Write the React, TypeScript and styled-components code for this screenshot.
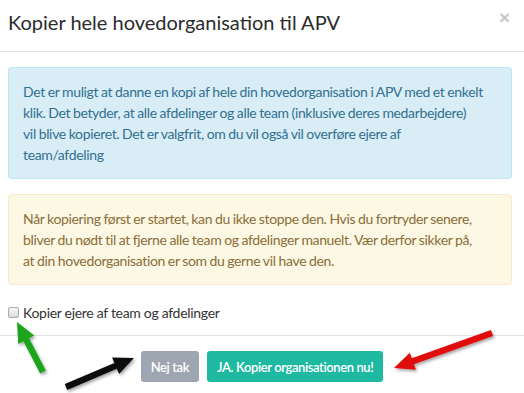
import React from 'react';
import styled, {createGlobalStyle} from "styled-components";

const GlobalStyle = createGlobalStyle`
    html, body {
        margin: 0;
        padding: 0;
        background: #fff;
    }
    body {
        font-family: Lato, "Noto Sans", sans-serif;
        color: #333;
    }
`

type ArrowPropsType = {
    x1: number
    y1: number
    x2: number
    y2: number
    color: string
}

// annotation arrow: shaft from (x1,y1) with head at (x2,y2)
const Arrow = (props: ArrowPropsType) => {
    const dx = props.x2 - props.x1
    const dy = props.y2 - props.y1
    const len = Math.sqrt(dx * dx + dy * dy)
    const ux = dx / len
    const uy = dy / len
    const px = -uy
    const py = ux
    const head = 20
    const hw = 9
    const sw = 3.2
    const bx = props.x2 - ux * head
    const by = props.y2 - uy * head
    const pts = [
        [props.x1 + px * sw, props.y1 + py * sw],
        [bx + px * sw, by + py * sw],
        [bx + px * hw, by + py * hw],
        [props.x2, props.y2],
        [bx - px * hw, by - py * hw],
        [bx - px * sw, by - py * sw],
        [props.x1 - px * sw, props.y1 - py * sw],
    ].map(p => p.join(",")).join(" ")
    return <polygon points={pts} fill={props.color} filter="url(#arrowShadow)"/>
}

const App = () => {
    return (
        <>
            <GlobalStyle/>
            <Modal>
                <Header>
                    <Title>Kopier hele hovedorganisation til APV</Title>
                    <Close>×</Close>
                </Header>
                <Body>
                    <Alert variant="info">
                        Det er muligt at danne en kopi af hele din hovedorganisation i APV med et enkelt<br/>
                        klik. Det betyder, at alle afdelinger og alle team (inklusive deres medarbejdere)<br/>
                        vil blive kopieret. Det er valgfrit, om du vil også vil overføre ejere af<br/>
                        team/afdeling
                    </Alert>
                    <Alert variant="warning">
                        Når kopiering først er startet, kan du ikke stoppe den. Hvis du fortryder senere,<br/>
                        bliver du nødt til at fjerne alle team og afdelinger manuelt. Vær derfor sikker på,<br/>
                        at din hovedorganisation er som du gerne vil have den.
                    </Alert>
                    <CheckRow>
                        <Checkbox type="checkbox"/>
                        Kopier ejere af team og afdelinger
                    </CheckRow>
                </Body>
                <Footer>
                    <Button variant="muted">Nej tak</Button>
                    <Button variant="primary">JA. Kopier organisationen nu!</Button>
                </Footer>
                <Annotations width="524" height="393" viewBox="0 0 524 393">
                    <defs>
                        <filter id="arrowShadow" x="-20%" y="-20%" width="140%" height="140%">
                            <feDropShadow dx="1.5" dy="2" stdDeviation="1.5" floodColor="#000" floodOpacity="0.35"/>
                        </filter>
                    </defs>
                    <Arrow x1={43} y1={372} x2={17} y2={322} color="#1aa51a"/>
                    <Arrow x1={66} y1={387} x2={134} y2={358} color="#111"/>
                    <Arrow x1={492} y1={333} x2={394} y2={368} color="#e00d0d"/>
                </Annotations>
            </Modal>
        </>
    );
};

export default App;

const Modal = styled.div`
    position: relative;
    width: 524px;
    height: 393px;
    background: #fff;
    overflow: hidden;
`
const Header = styled.div`
    display: flex;
    justify-content: space-between;
    align-items: flex-start;
    padding: 9px 14px 0 8px;
    height: 42px;
    border-bottom: 1px solid #e5e5e5;
`
const Title = styled.h4`
    margin: 0;
    font-size: 20px;
    font-weight: 400;
    line-height: 26px;
    color: #2b2b2b;
`
const Close = styled.span`
    font-family: "Liberation Sans", Arial, sans-serif;
    font-size: 19px;
    font-weight: 700;
    line-height: 14px;
    margin-top: 2px;
    color: #c8c8c8;
`
const Body = styled.div`
    display: flex;
    flex-direction: column;
    gap: 15px;
    padding: 15px 12px 0 8px;
    height: 283px;
    box-sizing: border-box;
`
const Alert = styled.div<{variant: "info" | "warning"}>`
    padding: 13px 10px 13px 14px;
    border: 1px solid ${props => props.variant === "info" ? "#bce8f1" : "#faebcc"};
    border-radius: 3px;
    background-color: ${props => props.variant === "info" ? "#d9edf7" : "#fcf8e3"};
    color: ${props => props.variant === "info" ? "#31708f" : "#8a6d3b"};
    font-size: 14px;
    line-height: 21px;
    letter-spacing: -0.35px;
    word-spacing: -0.4px;
    white-space: nowrap;
`
const CheckRow = styled.label`
    display: flex;
    align-items: center;
    gap: 4px;
    margin-top: 4px;
    font-size: 14px;
    letter-spacing: -0.3px;
    color: #333;
`
const Checkbox = styled.input`
    appearance: none;
    margin: 0;
    width: 11px;
    height: 11px;
    border: 1px solid #a9a9a9;
    border-radius: 2px;
    background: linear-gradient(#f4f4f4, #dcdcdc);
`
const Footer = styled.div`
    display: flex;
    justify-content: center;
    gap: 8px;
    padding-top: 15px;
    border-top: 1px solid #e5e5e5;
`
const Button = styled.button<{variant: "muted" | "primary"}>`
    height: 31px;
    padding: 0 10px;
    border: none;
    border-radius: 3px;
    font-family: Lato, "Noto Sans", sans-serif;
    font-size: 13px;
    font-weight: 600;
    letter-spacing: -0.4px;
    color: #fff;
    background-color: ${props => props.variant === "muted" ? "#9ea6b2" : "#1fb9a2"};
`
const Annotations = styled.svg`
    position: absolute;
    top: 0;
    left: 0;
    pointer-events: none;
`
